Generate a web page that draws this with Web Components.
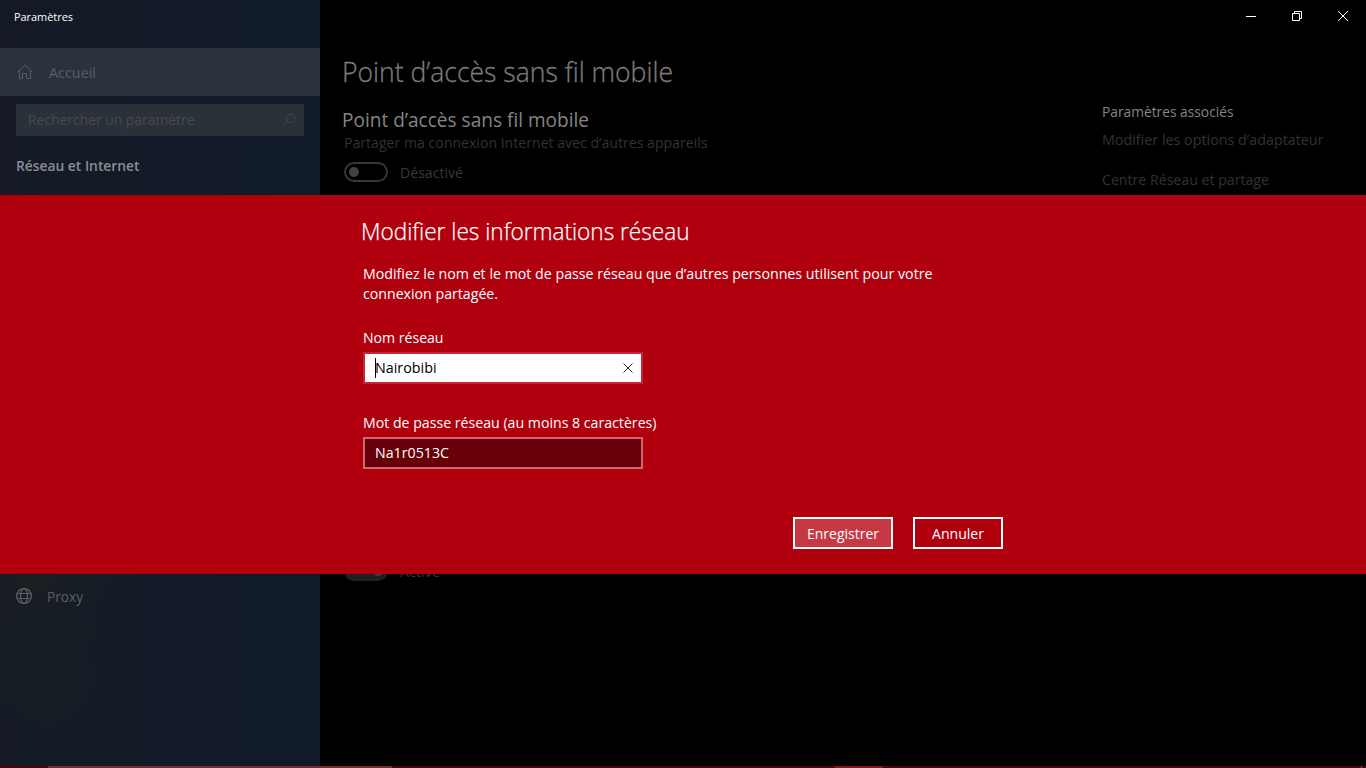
<!DOCTYPE html>
<html lang="fr">
<head>
<meta charset="utf-8">
<title>Paramètres</title>
<style>
html,body{margin:0;height:100%;background:#000;overflow:hidden}
body{font-family:"Open Sans","Noto Sans",sans-serif;font-size:14.4px}
</style>
</head>
<body>
<settings-app></settings-app>
<script>
const define = (name, html) => {
  const t = document.createElement('template');
  t.innerHTML = html;
  customElements.define(name, class extends HTMLElement {
    constructor() {
      super();
      this.attachShadow({ mode: 'open' }).append(t.content.cloneNode(true));
    }
    connectedCallback() {
      const s = this.getAttribute('s');
      if (s) this.style.fontSize = s + 'px';
    }
  });
};

/* A line of text with a fixed advance width: w = width, s = font size. */
define('ui-text', `<style>
:host{display:block;flex:none;line-height:20px;height:20px;white-space:nowrap}
span{display:inline-block;transform-origin:0 50%;line-height:inherit;vertical-align:top}
</style><span><slot></slot></span>`);

define('ui-icon', `<style>
:host{display:block;flex:none}
svg{display:none;fill:none;stroke:currentColor;stroke-width:1}
:host([name=home]) .home,:host([name=search]) .search,:host([name=globe]) .globe,
:host([name=min]) .min,:host([name=restore]) .restore,:host([name=close]) .close,
:host([name=clear]) .clear{display:block}
</style>
<svg class="home" width="16" height="16" viewBox="0 0 16 16" stroke-width="1.1"><path d="M.6 8.2 8 .9l7.4 7.3M2.5 6.8v7.7h3V9.5h4v5h4V6.8"/></svg>
<svg class="search" width="14" height="14" viewBox="0 0 14 14"><circle cx="8.6" cy="5.2" r="4.2"/><path d="M5.5 8.2.8 12.8"/></svg>
<svg class="globe" width="16" height="16" viewBox="0 0 16 16" style="stroke-width:1.2"><circle cx="8" cy="8" r="7.4"/><ellipse cx="8" cy="8" rx="3.5" ry="7.4"/><path d="M1.2 5.5h13.6M1.2 10.500h13.6"/></svg>
<svg class="min" width="10" height="10" viewBox="0 0 10 10"><path d="M0 5.5h10"/></svg>
<svg class="restore" width="10" height="10" viewBox="0 0 10 10"><path d="M.5 2.5h7v7h-7zM2.5 2.5v-2h7v7h-2"/></svg>
<svg class="close" width="10" height="10" viewBox="0 0 10 10"><path d="m0 0 10 10M10 0 0 10"/></svg>
<svg class="clear" width="10" height="10" viewBox="0 0 10 10"><path d="m.5.5 9 9M9.500.5l-9 9"/></svg>`);

define('window-controls', `<style>
:host{display:flex;justify-content:flex-end;height:32px;color:#fff}
div{width:46px;height:32px;display:flex;align-items:center;justify-content:center}
</style><div><ui-icon name="min"></ui-icon></div><div><ui-icon name="restore"></ui-icon></div><div><ui-icon name="close"></ui-icon></div>`);

define('ui-toggle', `<style>
:host{display:flex;align-items:center;gap:12px;height:20px;color:#393939}
.t{width:44px;height:20px;box-sizing:border-box;border:2px solid #373737;border-radius:10px;display:flex;align-items:center;padding:0 3px}
.t i{width:10px;height:10px;border-radius:50%;background:#424242}
.l{padding-top:2px}
:host([on]) .t{background:#202020;border-color:#202020;justify-content:flex-end}
</style><div class="t"><i></i></div><div class="l"><slot></slot></div>`);

define('side-bar', `<style>
:host{display:flex;flex-direction:column;width:320px;height:766px;box-sizing:border-box;
background:radial-gradient(ellipse 80px 90px at 48px 675px,#181e24,#181e2400),radial-gradient(ellipse 110px 90px at 35px 575px,#1a1f23,#1a1f2300),linear-gradient(90deg,#151a25,#121b27 45%,#111b27)}
.cap{height:48px;padding:7px 0 0 14px;box-sizing:border-box;color:#fff}
.home{height:48px;display:flex;align-items:center;gap:16px;padding-left:17px;background:#2c323c;color:#5a5c63}
.home ui-text{padding-top:2px}
.search{height:32px;margin:8px 16px 0;padding:0 8px 0 12px;display:flex;align-items:center;justify-content:space-between;background:#2a3138;color:#48494a}
.head{margin:20px 0 0 16px;color:#8b8e93;font-weight:600}
.nav{margin-top:410px;padding:0 0 0 16px;display:flex;align-items:flex-start;gap:15px;color:#5b5f64}
.nav ui-text{padding-top:1px}
.nav ui-icon{padding-top:2px}
</style>
<div class="cap"><ui-text w="59" s="11.5">Paramètres</ui-text></div>
<div class="home"><ui-icon name="home"></ui-icon><ui-text w="47">Accueil</ui-text></div>
<div class="search"><ui-text w="166.500">Rechercher un paramètre</ui-text><ui-icon name="search"></ui-icon></div>
<div class="head"><ui-text w="123.500">Réseau et Internet</ui-text></div>
<div class="nav"><ui-icon name="globe"></ui-icon><ui-text w="36">Proxy</ui-text></div>`);

define('main-pane', `<style>
:host{display:flex;flex-direction:column;flex:1;height:766px;background:#000;overflow:hidden}
.row{display:flex;justify-content:space-between;padding:20px 42px 0 24px}
.title{color:#7c7c7c;font-weight:300;margin-left:-2px;-webkit-text-stroke:.3px #7c7c7c}
.title ui-text{height:40px;line-height:40px}
.sub{color:#858585;margin:18px 0 0 -2px}
.desc{color:#323232;margin:3px 0 9px}
.right{width:222px;padding-top:50px;color:#323232;display:flex;flex-direction:column}
.right .h{color:#858585;margin-bottom:8px}
.gap{height:379px}
</style>
<window-controls></window-controls>
<div class="row">
<div>
<div class="title"><ui-text w="331" s="26.8">Point d’accès sans fil mobile</ui-text></div>
<div class="sub"><ui-text w="247" s="19.2">Point d’accès sans fil mobile</ui-text></div>
<div class="desc"><ui-text w="363.500">Partager ma connexion Internet avec d’autres appareils</ui-text></div>
<ui-toggle><ui-text w="63">Désactivé</ui-text></ui-toggle>
<div class="gap"></div>
<ui-toggle on><ui-text w="40">Activé</ui-text></ui-toggle>
</div>
<div class="right">
<ui-text class="h" w="131.500">Paramètres associés</ui-text>
<ui-text w="221.500" style="margin-bottom:20px">Modifier les options d’adaptateur</ui-text>
<ui-text w="167">Centre Réseau et partage</ui-text>
</div>
</div>`);

define('text-field', `<style>
:host{display:block;width:280px;color:#fff}
.box{margin-top:4px;height:32px;box-sizing:border-box;border:2px solid #cf6670;background:#670008;display:flex;align-items:center;padding:0 8px 0 10px}
:host([focused]) .box{background:#fff;border-color:#c92536;color:#000}
i{display:none;width:1px;height:20px;background:#000;margin-right:-1px}
:host([focused]) i{display:block}
ui-icon{display:none;margin-left:auto;color:#333}
:host([focused]) ui-icon{display:block}
</style><slot name="label"></slot><div class="box"><i></i><slot></slot><ui-icon name="clear"></ui-icon></div>`);

define('ui-button', `<style>
:host{display:flex;align-items:center;justify-content:center;width:90px;height:32px;box-sizing:border-box;border:2px solid #fff;padding-top:2px}
:host([primary]){width:100px;background:#c63944}
</style><slot></slot>`);

define('network-dialog', `<style>
:host{display:block;box-sizing:border-box;height:379px;background:#b0000e;color:#fff;padding:21px 363px 0}
.t{margin-left:-2px;font-weight:300;-webkit-text-stroke:.25px #fff}
.t ui-text{height:30px;line-height:30px}
.p{margin:18px 0 24px}
.f2{margin-top:29px}
.b{display:flex;justify-content:flex-end;gap:20px;margin-top:48px}
</style>
<div class="t"><ui-text w="328.500" s="23">Modifier les informations réseau</ui-text></div>
<div class="p"><ui-text w="569.500">Modifiez le nom et le mot de passe réseau que d’autres personnes utilisent pour votre</ui-text><ui-text w="135">connexion partagée.</ui-text></div>
<text-field focused><ui-text slot="label" w="80.500">Nom réseau</ui-text><ui-text w="61.500">Nairobibi</ui-text></text-field>
<text-field class="f2"><ui-text slot="label" w="293.500">Mot de passe réseau (au moins 8 caractères)</ui-text><ui-text w="74">Na1r0513C</ui-text></text-field>
<div class="b"><ui-button primary><ui-text w="72">Enregistrer</ui-text></ui-button><ui-button><ui-text w="52">Annuler</ui-text></ui-button></div>`);

define('task-strip', `<style>
:host{display:flex;height:2px;background:#46060c}
.a{width:344px;margin-left:48px;background:#732d31}
.b{width:48px;margin-left:443px;background:#851420}
.c{width:1px;margin-left:478px;background:#7d5054}
</style><div class="a"></div><div class="b"></div><div class="c"></div>`);

define('settings-app', `<style>
:host{display:block;position:relative;width:1366px;height:768px;overflow:hidden}
.body{display:flex;height:766px}
network-dialog{position:absolute;left:0;right:0;top:195px}
</style><div class="body"><side-bar></side-bar><main-pane></main-pane></div><task-strip></task-strip><network-dialog></network-dialog>`);

/* Fit every line to its advance width once all elements are laid out. */
(function fit(root) {
  root.querySelectorAll('*').forEach(e => {
    if (e.localName === 'ui-text') {
      const s = e.shadowRoot.querySelector('span'), w = +e.getAttribute('w');
      e.style.width = w + 'px';
      s.style.transform = 'scaleX(' + w / s.getBoundingClientRect().width + ')';
    } else if (e.shadowRoot) fit(e.shadowRoot);
  });
})(document);
</script>
</body>
</html>
